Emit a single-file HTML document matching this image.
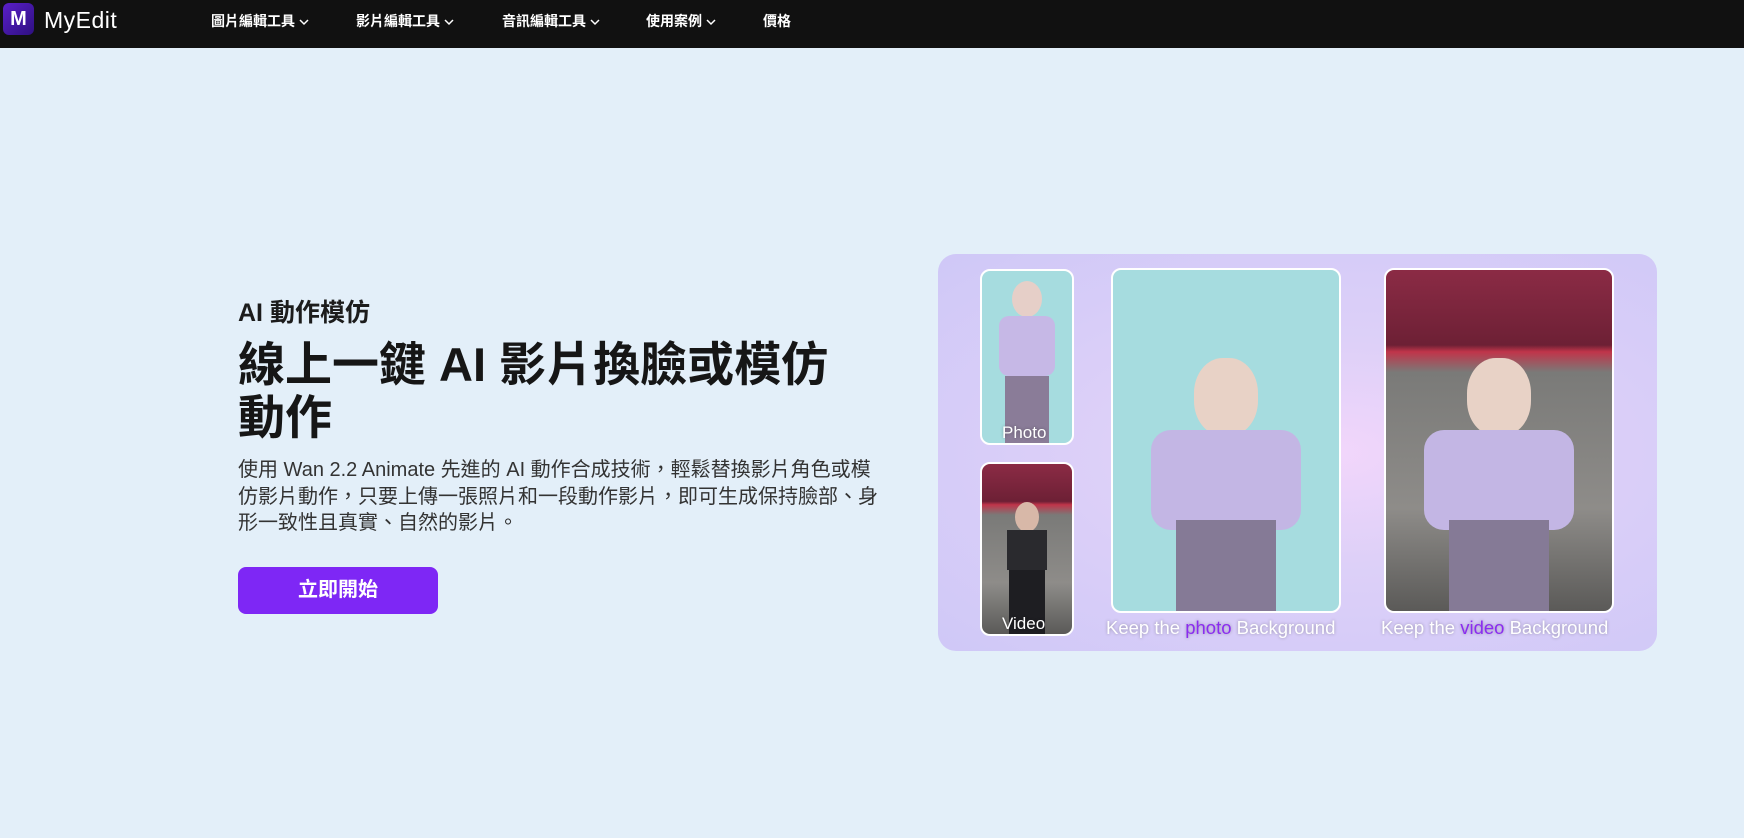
<!DOCTYPE html>
<html><head><meta charset="utf-8"><style>
*{margin:0;padding:0;box-sizing:border-box}
body{width:1744px;height:838px;background:#e3eff9;font-family:"Liberation Sans","Noto Sans CJK TC",sans-serif;position:relative;overflow:hidden;color:#1c1c1c}
.nav{position:absolute;left:0;top:0;width:1744px;height:48px;background:#111}
.logo{position:absolute;left:3px;top:3px;width:31px;height:32px;border-radius:6px;background:linear-gradient(135deg,#5a1fc9,#2e1080);color:#fff;font-weight:bold;font-size:20px;text-align:center;line-height:32px}
.brand{position:absolute;left:44px;top:7px;color:#fff;font-size:23px;letter-spacing:.5px}
.ni{position:absolute;top:11px;color:#fff;font-size:14px;font-weight:bold}
.ni svg{vertical-align:middle;margin-left:4px}
.sub{position:absolute;left:238px;top:293px;font-size:25px;font-weight:bold}
h1{position:absolute;left:238px;top:338px;font-size:47px;line-height:53px;font-weight:bold;color:#161616}
p{position:absolute;left:238px;top:457px;font-size:20px;line-height:26.5px;color:#333;white-space:nowrap}
.btn{position:absolute;left:238px;top:567px;width:200px;height:47px;border-radius:8px;background:#7e27f5;color:#fff;font-size:20px;font-weight:bold;text-align:center;line-height:47px}
.panel{position:absolute;left:938px;top:254px;width:719px;height:397px;border-radius:18px;background:radial-gradient(ellipse at 55% 50%,#f2d6fb 0%,#ddd0f8 40%,#cfc8f7 100%)}
.im{position:absolute;border:2px solid #fff;border-radius:10px;overflow:hidden}
.teal{background:#a6dcdf}
.dark{background:linear-gradient(#8b2b45 0%,#6d2035 22%,#c0354a 24%,#7a7a78 30%,#8e8c89 70%,#5b5a58 100%)}
.cap{position:absolute;color:#fff;font-size:18.5px;text-shadow:0 0 3px rgba(0,0,0,.3)}
.cap b{color:#8b2cf0;font-weight:normal}
.fig{position:absolute;left:50%;transform:translateX(-50%)}
</style></head><body>
<div class="nav">
<div class="logo">M</div><div class="brand">MyEdit</div>
<div class="ni" style="left:211px">圖片編輯工具<svg width="10" height="8"><path d="M1 2l4 4 4-4" stroke="#fff" stroke-width="1.5" fill="none"/></svg></div>
<div class="ni" style="left:356px">影片編輯工具<svg width="10" height="8"><path d="M1 2l4 4 4-4" stroke="#fff" stroke-width="1.5" fill="none"/></svg></div>
<div class="ni" style="left:502px">音訊編輯工具<svg width="10" height="8"><path d="M1 2l4 4 4-4" stroke="#fff" stroke-width="1.5" fill="none"/></svg></div>
<div class="ni" style="left:646px">使用案例<svg width="10" height="8"><path d="M1 2l4 4 4-4" stroke="#fff" stroke-width="1.5" fill="none"/></svg></div>
<div class="ni" style="left:763px">價格</div>
</div>
<div class="sub">AI 動作模仿</div>
<h1>線上一鍵 AI 影片換臉或模仿<br>動作</h1>
<p>使用 Wan 2.2 Animate 先進的 AI 動作合成技術，輕鬆替換影片角色或模<br>仿影片動作，只要上傳一張照片和一段動作影片，即可生成保持臉部、身<br>形一致性且真實、自然的影片。</p>
<div class="btn">立即開始</div>
<div class="panel">
<div class="im teal" style="left:42px;top:15px;width:94px;height:176px">
 <div class="fig" style="top:10px;width:30px;height:36px;border-radius:50%;background:#e6cfc8"></div>
 <div class="fig" style="top:45px;width:56px;height:60px;background:#c6b8e6;border-radius:10px"></div>
 <div class="fig" style="top:105px;width:44px;height:70px;background:#8a7c98"></div>
 <div class="cap" style="left:20px;top:152px;font-size:17px">Photo</div></div>
<div class="im dark" style="left:42px;top:208px;width:94px;height:174px">
 <div class="fig" style="top:38px;width:24px;height:30px;border-radius:50%;background:#d8b8a8"></div>
 <div class="fig" style="top:66px;width:40px;height:40px;background:#2a2a2e"></div>
 <div class="fig" style="top:106px;width:36px;height:70px;background:#1e1e22"></div>
 <div class="cap" style="left:20px;top:150px;font-size:17px">Video</div></div>
<div class="im teal" style="left:173px;top:14px;width:230px;height:345px">
 <div class="fig" style="top:88px;width:64px;height:78px;border-radius:45%;background:#e8d2c6"></div>
 <div class="fig" style="top:160px;width:150px;height:100px;background:#c3b6e4;border-radius:20px"></div>
 <div class="fig" style="top:250px;width:100px;height:100px;background:#857a96"></div></div>
<div class="im dark" style="left:446px;top:14px;width:230px;height:345px">
 <div class="fig" style="top:88px;width:64px;height:78px;border-radius:45%;background:#e8d2c6"></div>
 <div class="fig" style="top:160px;width:150px;height:100px;background:#c3b6e4;border-radius:20px"></div>
 <div class="fig" style="top:250px;width:100px;height:100px;background:#857a96"></div></div>
<div class="cap" style="left:168px;top:363px">Keep the <b>photo</b> Background</div>
<div class="cap" style="left:443px;top:363px">Keep the <b>video</b> Background</div>
</div>
</body></html>
